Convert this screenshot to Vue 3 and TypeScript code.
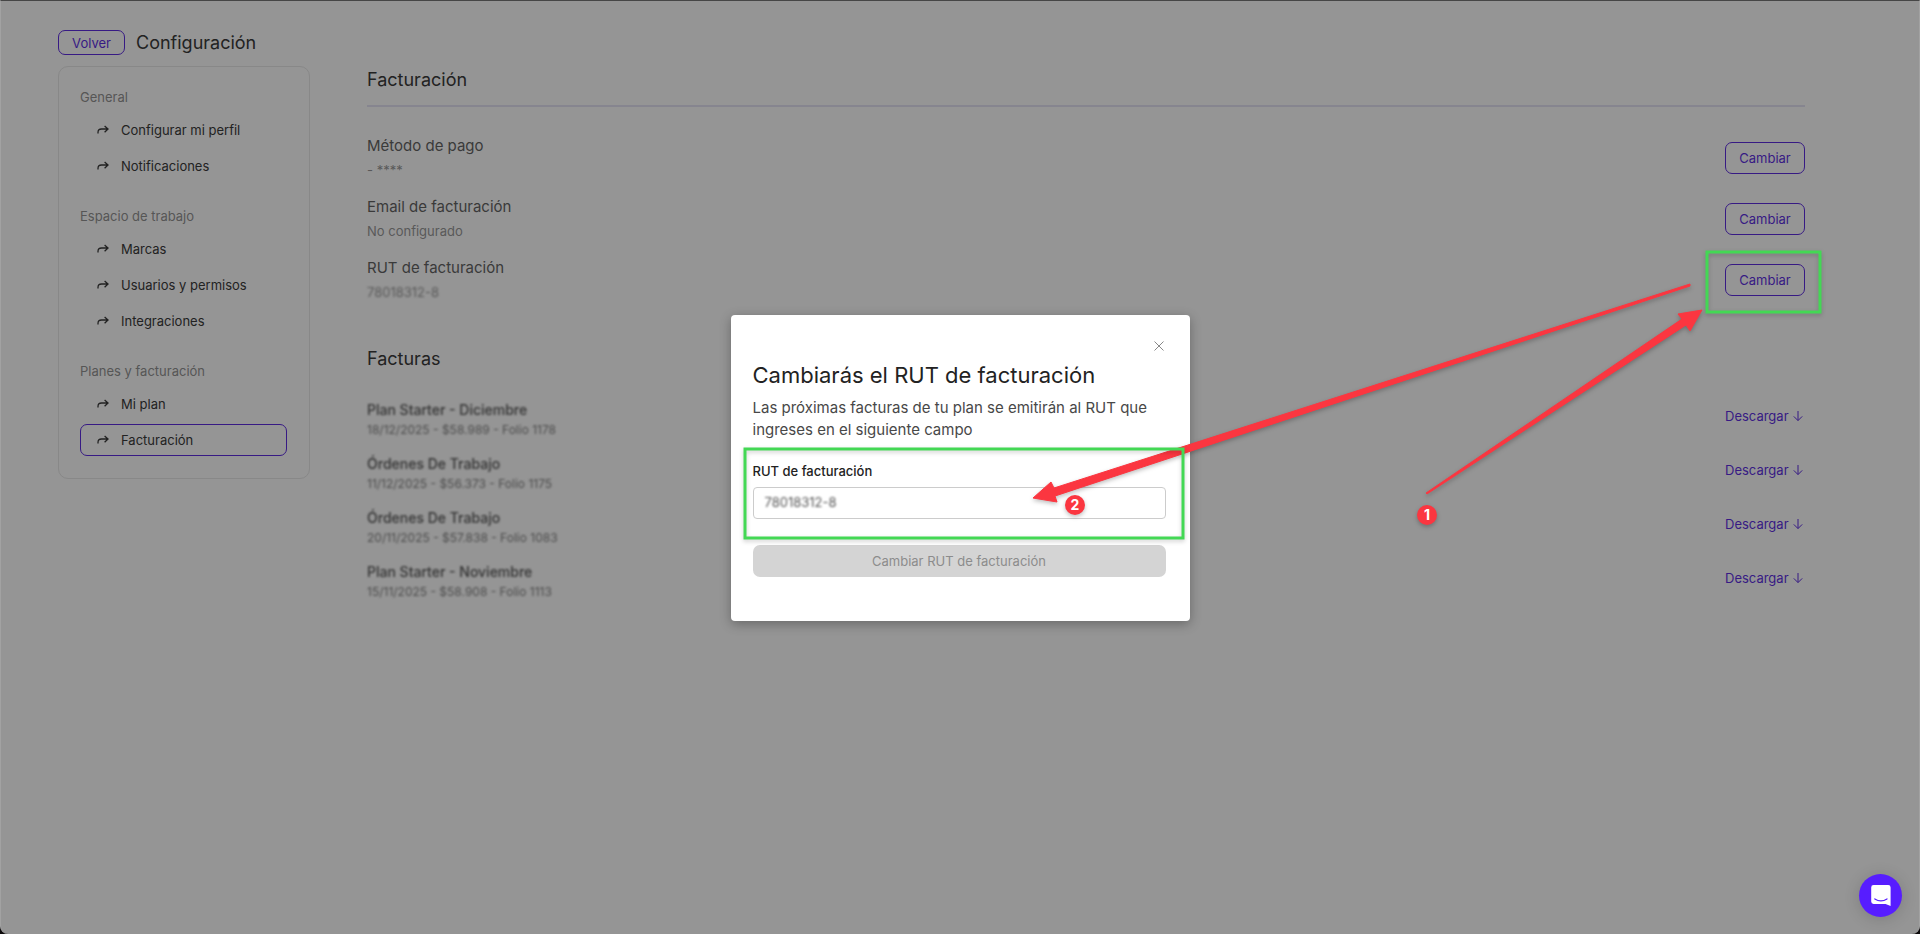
<script setup lang="ts">
import { ref } from 'vue'

interface MenuGroup {
  title: string
  items: string[]
}

interface Setting {
  label: string
  value: string
  hidden?: boolean
}

interface Invoice {
  title: string
  detail: string
}

const groups: MenuGroup[] = [
  { title: 'General', items: ['Configurar mi perfil', 'Notificaciones'] },
  { title: 'Espacio de trabajo', items: ['Marcas', 'Usuarios y permisos', 'Integraciones'] },
  { title: 'Planes y facturación', items: ['Mi plan', 'Facturación'] },
]
const current = 'Facturación'

const settings: Setting[] = [
  { label: 'Método de pago', value: '- ****' },
  { label: 'Email de facturación', value: 'No configurado' },
  { label: 'RUT de facturación', value: '78018312-8', hidden: true },
]

const invoices: Invoice[] = [
  { title: 'Plan Starter - Diciembre', detail: '18/12/2025 - $58.989 - Folio 1178' },
  { title: 'Órdenes De Trabajo', detail: '11/12/2025 - $56.373 - Folio 1175' },
  { title: 'Órdenes De Trabajo', detail: '20/11/2025 - $57.838 - Folio 1083' },
  { title: 'Plan Starter - Noviembre', detail: '15/11/2025 - $58.908 - Folio 1113' },
]

const rut = ref('78018312-8')
</script>

<template>
  <div class="page">
    <header class="top">
      <button class="outline small" type="button">Volver</button>
      <h1>Configuración</h1>
    </header>

    <div class="columns">
      <nav class="sidebar">
        <section v-for="group in groups" :key="group.title" class="group">
          <h2>{{ group.title }}</h2>
          <ul>
            <li v-for="item in group.items" :key="item">
              <a href="#" :class="{ active: item === current }">
                <svg class="turn" viewBox="0 0 12 10" aria-hidden="true">
                  <path d="M1 8.6V7.4C1 5 2.4 4 4.6 4H11M7.6 1 11 4 7.6 7.2" />
                </svg>
                {{ item }}
              </a>
            </li>
          </ul>
        </section>
      </nav>

      <main class="content">
        <h2 class="title ruled">Facturación</h2>
        <ul class="settings">
          <li v-for="setting in settings" :key="setting.label">
            <div>
              <h3>{{ setting.label }}</h3>
              <p :class="{ hidden: setting.hidden }">{{ setting.value }}</p>
            </div>
            <button class="outline" type="button">Cambiar</button>
          </li>
        </ul>

        <h2 class="title">Facturas</h2>
        <ul class="invoices">
          <li v-for="(invoice, i) in invoices" :key="i">
            <div class="hidden">
              <h3>{{ invoice.title }}</h3>
              <p>{{ invoice.detail }}</p>
            </div>
            <a class="download" href="#">
              Descargar
              <svg viewBox="0 0 10 12" aria-hidden="true">
                <path d="M5 1V10.4M.8 6.4 5 10.6 9.2 6.4" />
              </svg>
            </a>
          </li>
        </ul>
      </main>
    </div>

    <div class="overlay">
      <form class="dialog" role="dialog" aria-labelledby="dialog-title" @submit.prevent>
        <button class="close" type="button" aria-label="Cerrar">
          <svg viewBox="0 0 10 10" aria-hidden="true"><path d="M.5.5 9.5 9.5M9.5.5.5 9.5" /></svg>
        </button>
        <h2 id="dialog-title">Cambiarás el RUT de facturación</h2>
        <p>Las próximas facturas de tu plan se emitirán al RUT que ingreses en el siguiente campo</p>
        <label for="rut">RUT de facturación</label>
        <div class="field"><input id="rut" v-model="rut" type="text" /></div>
        <button class="submit" type="submit" disabled>Cambiar RUT de facturación</button>
      </form>
    </div>

    <button class="chat" type="button" aria-label="Chat">
      <svg viewBox="0 0 20 21" aria-hidden="true">
        <path fill="#fff" d="M2.6 0H17.2A2.4 2.4 0 0 1 19.6 2.4V21L14.6 19H2.6A2.4 2.4 0 0 1 .2 16.6V2.4A2.4 2.4 0 0 1 2.6 0Z" />
        <path fill="none" stroke="#571dff" stroke-width="1.2" stroke-linecap="round" d="M3.8 13.9Q9.9 18 16 13.9" />
      </svg>
    </button>

    <svg class="notes" viewBox="0 0 1920 934">
      <g class="red">
        <path d="M1690 284 1054 488 1051 482 1033 498 1057 502 1055 496 1690 286Z" />
        <path d="M1426 493 1682 319 1678 314 1702 310 1690 331 1686 325 1427 494Z" />
        <circle cx="1427" cy="515" r="10" />
        <circle cx="1075" cy="505" r="10" />
      </g>
      <g class="green">
        <rect x="1707" y="252" width="113" height="60" />
        <rect x="745" y="449" width="438" height="89" />
      </g>
      <text x="1427" y="520">1</text>
      <text x="1075" y="510">2</text>
    </svg>
  </div>
</template>

<style>
html,
body {
  background: #0c090b;
}
</style>

<style scoped>
* {
  box-sizing: border-box;
}

.page {
  position: relative;
  min-height: 100vh;
  padding: 29px 57px 0;
  border: 1px solid #a2a2a2;
  border-top-color: #464646;
  border-bottom: 0;
  border-radius: 0 0 8px 8px;
  background: #959595;
  color: #222;
  font: 400 13px/20px Inter, "Liberation Sans", sans-serif;
}

h1,
h2,
h3,
p,
ul {
  margin: 0;
  padding: 0;
  font-weight: 400;
  list-style: none;
}

button,
input {
  font: inherit;
}

a {
  text-decoration: none;
}

svg {
  fill: none;
  stroke: currentColor;
}

.top {
  display: flex;
  align-items: center;
  gap: 11px;
  margin-bottom: 11px;
}

.top h1 {
  font-size: 18px;
  line-height: 25px;
}

.outline {
  width: 80px;
  height: 32px;
  padding: 0;
  border: 1px solid #371a84;
  border-radius: 7px;
  background: transparent;
  color: #371a84;
}

.outline.small {
  width: 67px;
  height: 25px;
}

.columns {
  display: flex;
  align-items: flex-start;
}

.sidebar {
  display: flex;
  flex: none;
  flex-direction: column;
  gap: 24px;
  width: 252px;
  padding: 20px 22px 22px 21px;
  border: 1px solid #888;
  border-radius: 10px;
}

.group h2 {
  margin-bottom: 7px;
  color: #565656;
  font-size: 13px;
}

.group ul {
  display: grid;
  gap: 4px;
}

.group a {
  display: flex;
  align-items: center;
  gap: 12px;
  height: 32px;
  padding: 0 16px;
  border: 1px solid transparent;
  border-radius: 7px;
  color: #222;
}

.group a.active {
  border-color: #371a84;
}

.turn {
  width: 12px;
  height: 10px;
  stroke-width: 1.3;
}

.content {
  flex: 1;
  padding: 0 57px;
}

.title {
  font-size: 18px;
  line-height: 27px;
}

.ruled {
  padding-bottom: 12px;
  border-bottom: 2px solid #86858f;
}

.settings {
  display: grid;
  gap: 13px;
  margin: 27px 0 41px;
}

.settings li {
  display: flex;
  align-items: center;
  justify-content: space-between;
}

.settings h3 {
  color: #3a3a3a;
  font-size: 15px;
  line-height: 24px;
}

.settings p {
  color: #595959;
  line-height: 24px;
}

.hidden {
  filter: blur(1px);
}

.invoices {
  display: grid;
  gap: 14px;
  margin-top: 28px;
}

.invoices li {
  display: flex;
  align-items: flex-start;
  justify-content: space-between;
}

.invoices h3 {
  color: #333;
  font-size: 14px;
  font-weight: 500;
}

.invoices p {
  color: #4d4d4d;
  font-size: 12px;
}

.download {
  display: flex;
  align-items: center;
  justify-content: space-between;
  width: 78px;
  margin-right: 2px;
  color: #371a84;
  line-height: 32px;
}

.download svg {
  width: 10px;
  height: 12px;
}

.overlay {
  position: absolute;
  inset: 0;
  display: flex;
  align-items: center;
  justify-content: center;
  padding-top: 1px;
}

.dialog {
  display: flex;
  flex-direction: column;
  width: 459px;
  padding: 26px 24px 44px 22px;
  border-radius: 4px;
  background: #fff;
  box-shadow: 0 3px 12px rgb(0 0 0 / 30%);
}

.close {
  display: flex;
  align-self: flex-end;
  padding: 0;
  margin-right: 2px;
  border: 0;
  background: none;
  color: #888;
}

.close svg {
  width: 10px;
  height: 10px;
}

.dialog h2 {
  margin: 9px 0 7px;
  font-size: 22px;
  line-height: 30px;
}

.dialog p {
  color: #484848;
  font-size: 15px;
  line-height: 22px;
}

.dialog label {
  margin: 20px 0 6px;
  font-weight: 500;
}

.field {
  height: 32px;
  border: 1px solid #ccc;
  border-radius: 4px;
}

.field input {
  width: 100%;
  height: 28px;
  padding: 0 11px;
  border: 0;
  outline: 0;
  background: transparent;
  color: #555;
  filter: blur(1px);
}

.submit {
  height: 32px;
  margin-top: 26px;
  border: 0;
  border-radius: 7px;
  background: #d4d4d4;
  color: #8c8c8c;
}

.chat {
  position: absolute;
  right: 17px;
  bottom: 17px;
  display: grid;
  place-items: center;
  width: 43px;
  height: 43px;
  padding: 0;
  border: 0;
  border-radius: 50%;
  background: #571dff;
  box-shadow: 0 2px 16px rgb(0 0 0 / 16%);
}

.chat svg {
  width: 20px;
  height: 21px;
  stroke: none;
}

.notes {
  position: absolute;
  top: -1px;
  left: -1px;
  width: calc(100% + 2px);
  pointer-events: none;
  stroke: none;
}

.red {
  fill: #fb3640;
  stroke: #fb3640;
  stroke-linejoin: round;
  filter: drop-shadow(0 2px 2px rgb(0 0 0 / 25%));
}

.red circle {
  stroke: none;
}

.green {
  fill: none;
  stroke: #43d854;
  stroke-width: 3;
  filter: drop-shadow(0 2px 2px rgb(0 0 0 / 20%));
}

.notes text {
  fill: #fff;
  font-size: 14px;
  font-weight: 700;
  text-anchor: middle;
}
</style>
